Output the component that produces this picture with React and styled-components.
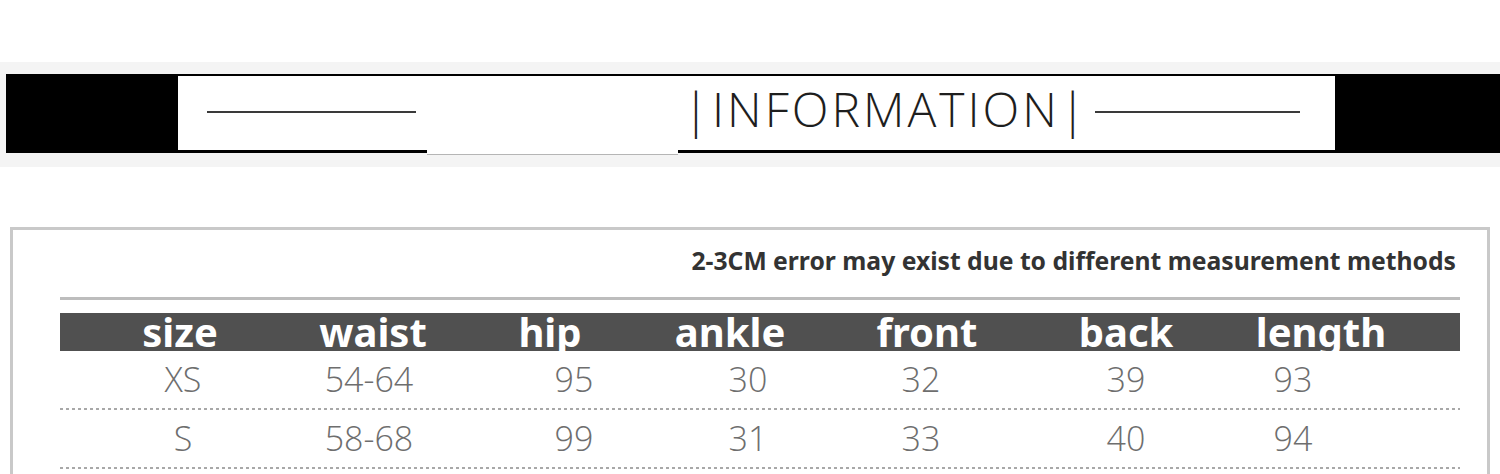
import React from "react";
import styled, { createGlobalStyle } from "styled-components";

const GlobalStyle = createGlobalStyle`
  html, body {
    margin: 0;
    padding: 0;
    background: #ffffff;
  }
  body {
    width: 1500px;
    height: 474px;
    overflow: hidden;
  }
`;

const headers = ["size", "waist", "hip", "ankle", "front", "back", "length"];
const rows = [
  ["XS", "54-64", "95", "30", "32", "39", "93"],
  ["S", "58-68", "99", "31", "33", "40", "94"],
];

// column widths picked so each cell centre sits where the chart has it
const HEAD_COLS = "240px 146px 208px 152px 242px 156px 234px";
const BODY_COLS = "246px 126px 284px 64px 282px 128px 206px";

const App = () => {
  return (
    <Page>
      <GlobalStyle />
      <Band>
        <Banner>
          <Panel>
            <Segment $width={249}>
              <Rule $width={209} />
            </Segment>
            <Gap />
            <Segment $grow>
              <Title>|INFORMATION|</Title>
              <Rule $width={205} />
            </Segment>
          </Panel>
        </Banner>
      </Band>
      <Sheet>
        <Caption>2-3CM error may exist due to different measurement methods</Caption>
        <Table>
          <TopRule />
          <HeadRow $cols={HEAD_COLS}>
            {headers.map((h) => (
              <HeadCell key={h}>{h}</HeadCell>
            ))}
          </HeadRow>
          {rows.map((r) => (
            <BodyRow key={r[0]} $cols={BODY_COLS}>
              {r.map((v, i) => (
                <BodyCell key={i}>{v}</BodyCell>
              ))}
            </BodyRow>
          ))}
        </Table>
      </Sheet>
    </Page>
  );
};

export default App;

const Page = styled.div`
  padding-top: 62px;
  font-family: "Noto Sans", "Liberation Sans", sans-serif;
`;

const Band = styled.div`
  background: #f4f4f4;
  height: 105px;
  padding: 12px 0 0 6px;
  box-sizing: border-box;
`;

const Banner = styled.div`
  background: #000000;
  height: 79px;
  padding: 2px 165px 0 172px;
  box-sizing: border-box;
`;

const Panel = styled.div`
  display: flex;
  align-items: flex-start;
  height: 74px;
`;

const Segment = styled.div`
  display: flex;
  align-items: center;
  height: 74px;
  background: #ffffff;
  box-sizing: border-box;
  ${(p) => (p.$grow ? "flex: 1; padding-left: 5px;" : `width: ${p.$width}px; padding-left: 29px;`)}
`;

const Gap = styled.div`
  width: 251px;
  height: 78px;
  background: #ffffff;
  border-bottom: 1px solid #b5b5b5;
`;

const Rule = styled.div`
  width: ${(p) => p.$width}px;
  height: 2px;
  margin-top: -2px;
  background: #3a3a3a;
`;

const Title = styled.div`
  font-family: "Open Sans", "Liberation Sans", sans-serif;
  font-weight: 300;
  font-size: 48px;
  letter-spacing: 3px;
  color: #1e1e1e;
  margin-right: 6px;
  margin-bottom: 8px;
  line-height: 1;
`;

const Sheet = styled.div`
  margin: 60px 10px 0;
  border: 3px solid #c9c9c9;
  border-bottom: none;
  height: 260px;
  padding: 0 27px 0 47px;
`;

const Caption = styled.div`
  margin-top: 15px;
  padding-right: 4px;
  text-align: right;
  font-size: 24.7px;
  line-height: 32px;
  font-weight: 700;
  color: #333333;
`;

const Table = styled.div`
  margin-top: 20px;
`;

const TopRule = styled.div`
  height: 3px;
  background: #bdbdbd;
  margin-bottom: 13px;
`;

const HeadRow = styled.div`
  display: grid;
  grid-template-columns: ${(p) => p.$cols};
  height: 38px;
  background: #505050;
`;

const HeadCell = styled.div`
  text-align: center;
  color: #ffffff;
  font-weight: 700;
  font-size: 40px;
  line-height: 37px;
  height: 38px;
`;

const BodyRow = styled.div`
  display: grid;
  grid-template-columns: ${(p) => p.$cols};
  height: 59px;
  background: linear-gradient(to right, #a8a8a8 50%, transparent 0) left bottom / 6px 2px repeat-x;
`;

const BodyCell = styled.div`
  text-align: center;
  font-family: "Open Sans", "Liberation Sans", sans-serif;
  font-weight: 300;
  font-size: 34px;
  line-height: 57px;
  color: #6e6e6e;
`;
